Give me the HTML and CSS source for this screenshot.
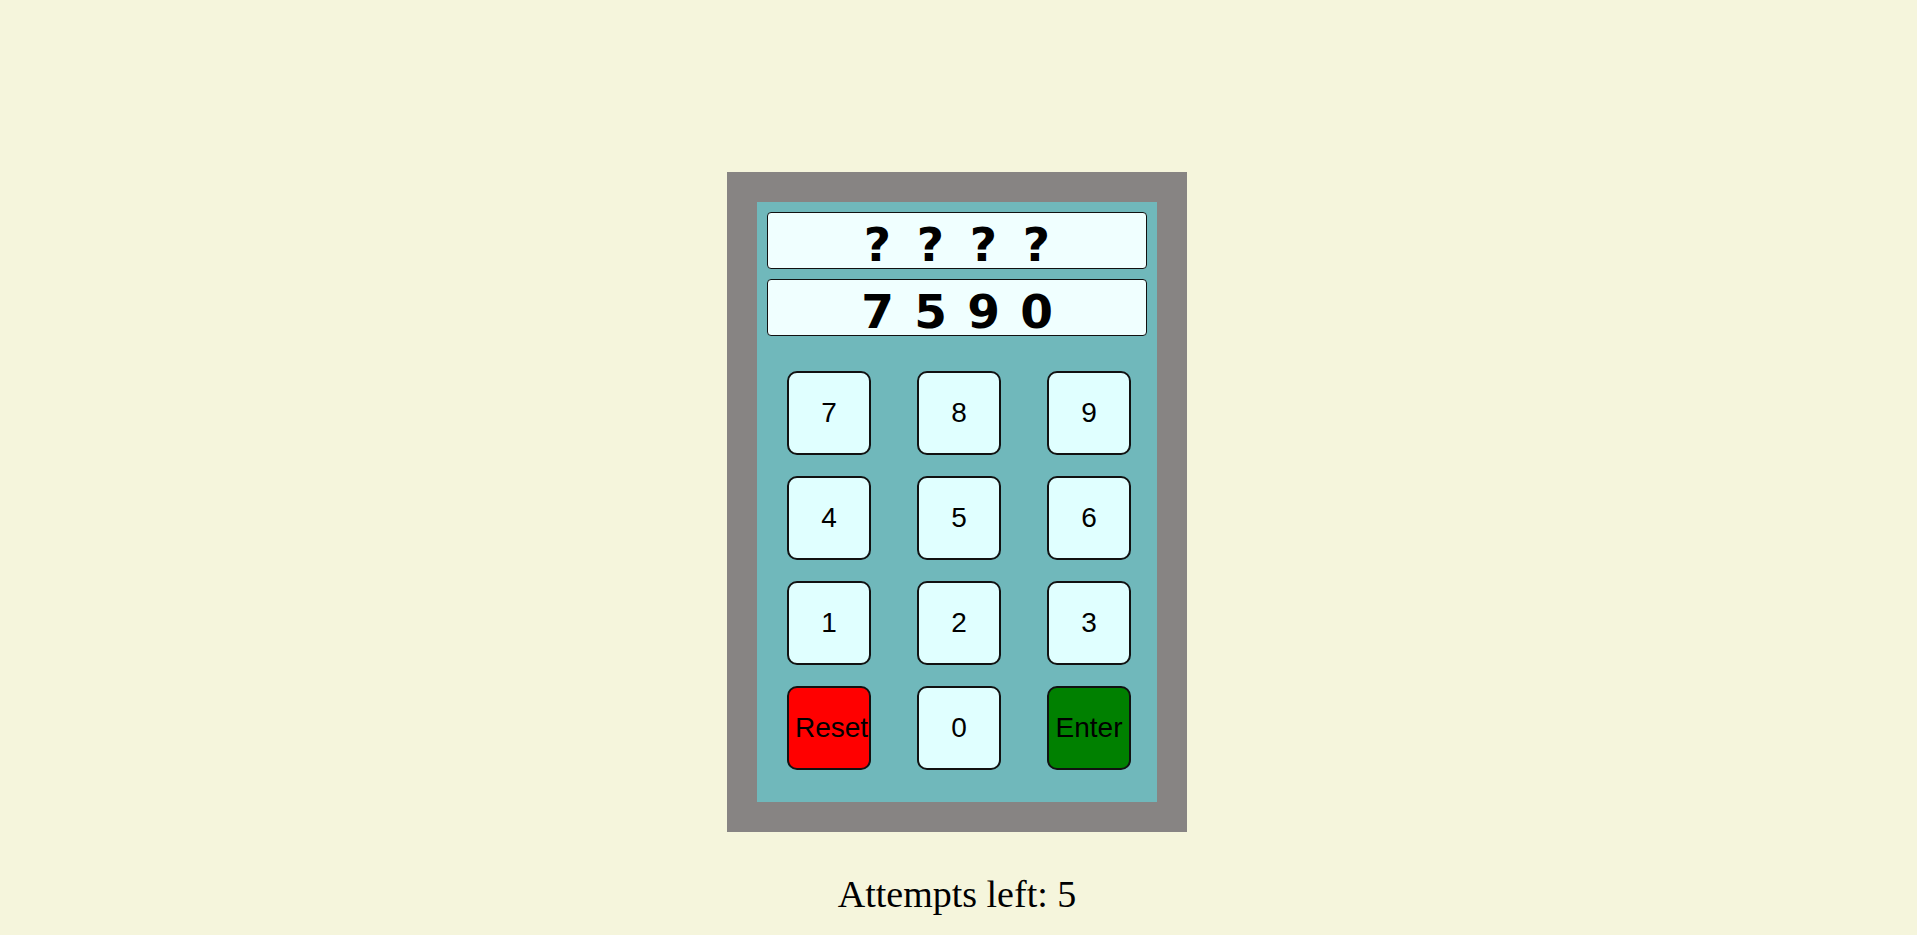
FILE: index.html
```html
<!DOCTYPE html>
<html>
<head>
<meta charset="utf-8">
<title>Safe</title>
<link rel="stylesheet" href="styles.css">
</head>
<body>
<main class="page">
  <div class="safe">
    <div class="panel">
      <div class="display"><span class="ch">?</span><span class="ch">?</span><span class="ch">?</span><span class="ch">?</span></div>
      <div class="display second"><span class="ch">7</span><span class="ch">5</span><span class="ch">9</span><span class="ch">0</span></div>
      <div class="keypad">
        <button class="key">7</button>
        <button class="key">8</button>
        <button class="key">9</button>
        <button class="key">4</button>
        <button class="key">5</button>
        <button class="key">6</button>
        <button class="key">1</button>
        <button class="key">2</button>
        <button class="key">3</button>
        <button class="key reset">Reset</button>
        <button class="key">0</button>
        <button class="key enter">Enter</button>
      </div>
    </div>
  </div>
  <p class="attempts">Attempts left: 5</p>
</main>
</body>
</html>
```
FILE: styles.css
```css
html, body {
  margin: 0;
  padding: 0;
  background: #f5f5dc;
}

.page {
  display: flex;
  flex-direction: column;
  align-items: center;
  padding-top: 172px;
  padding-right: 3px;
}

.safe {
  width: 400px;
  border: 30px solid #878483;
  background: #70b8bb;
}

.panel {
  padding: 10px 10px 32px 10px;
}

.display {
  box-sizing: border-box;
  height: 57px;
  border: 1px solid #111;
  border-radius: 4px;
  background: #f0ffff;
  padding-top: 8px;
  display: flex;
  justify-content: center;
  font-family: "DejaVu Sans", sans-serif;
  font-weight: bold;
  font-size: 47px;
  line-height: 47px;
  color: #000;
}

.ch {
  width: 53px;
  text-align: center;
}

.display.second {
  margin-top: 10px;
}

.keypad {
  display: grid;
  grid-template-columns: repeat(3, 84px);
  grid-auto-rows: 84px;
  column-gap: 46px;
  row-gap: 21px;
  margin-top: 35px;
  padding-left: 20px;
}

.key {
  box-sizing: border-box;
  width: 84px;
  height: 84px;
  margin: 0;
  padding: 1px 6px;
  border: 2px solid #111;
  border-radius: 10px;
  background: #e0ffff;
  font-family: "Liberation Sans", Arial, sans-serif;
  font-size: 28px;
  color: #000;
  overflow: hidden;
  white-space: nowrap;
}

.key.reset {
  background: #ff0000;
}

.key.enter {
  background: #008000;
}

.attempts {
  margin: 40px 0 0 0;
  font-family: "Liberation Serif", "Times New Roman", serif;
  font-size: 38px;
  line-height: 44px;
  color: #000;
}
```
